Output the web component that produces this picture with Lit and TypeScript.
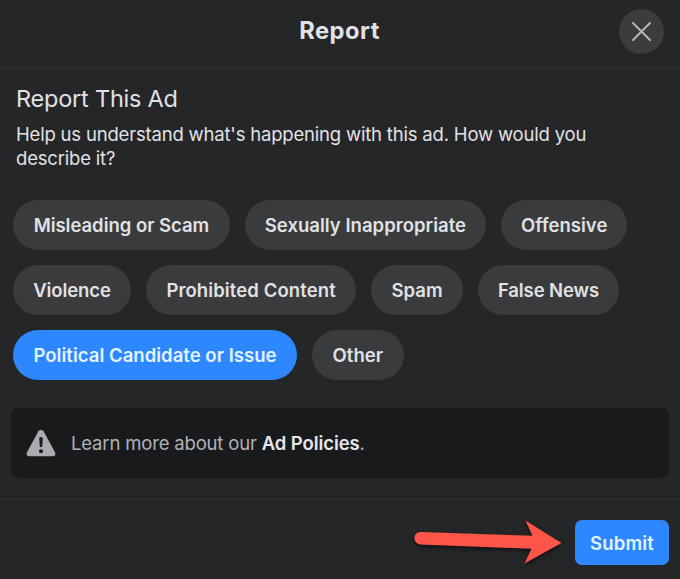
import { LitElement, html, css } from "lit";
import { customElement, state } from "lit/decorators.js";
import { classMap } from "lit/directives/class-map.js";
import { styleMap } from "lit/directives/style-map.js";

interface Reason {
  label: string;
  width: number;
  tracking: number;
}

const REASONS: Reason[][] = [
  [
    { label: "Misleading or Scam", width: 216.3, tracking: -0.03 },
    { label: "Sexually Inappropriate", width: 241, tracking: 0.03 },
    { label: "Offensive", width: 126, tracking: 0.03 },
  ],
  [
    { label: "Violence", width: 117.5, tracking: -0.1 },
    { label: "Prohibited Content", width: 210, tracking: 0.1 },
    { label: "Spam", width: 91.3, tracking: 0 },
    { label: "False News", width: 141, tracking: -0.1 },
  ],
  [
    { label: "Political Candidate or Issue", width: 283.5, tracking: 0.03 },
    { label: "Other", width: 91.5, tracking: 0.1 },
  ],
];

@customElement("app-root")
export class AppRoot extends LitElement {
  static styles = css`
    :host {
      display: flex;
      flex-direction: column;
      position: relative;
      box-sizing: border-box;
      width: 680px;
      height: 579px;
      overflow: hidden;
      background: #252628;
      color: #e0e2e5;
      font-family: Inter, "Liberation Sans", sans-serif;
      font-size: 18.5px;
    }
    * { box-sizing: border-box; }
    button { font: inherit; color: inherit; border: 0; margin: 0; white-space: nowrap; }
    header {
      display: grid;
      grid-template-columns: 1fr auto 1fr;
      align-items: center;
      height: 69px;
      padding: 0 16px 6px 15px;
      border-bottom: 1px solid #303133;
    }
    h1 { grid-column: 2; margin: 0; font-size: 23.7px; font-weight: 700; line-height: 30px; letter-spacing: 0.5px; }
    .close {
      justify-self: end;
      width: 45px;
      height: 45px;
      padding: 0;
      border-radius: 50%;
      background: #3b3c3e;
      display: grid;
      place-items: center;
    }
    svg { display: block; }
    .intro { padding: 15px 16px 0; height: 131px; }
    h2 { margin: 0; font-size: 23.5px; font-weight: 400; line-height: 30px; letter-spacing: -0.22px; }
    p { margin: 0; }
    .intro p { margin-top: 8px; line-height: 24px; letter-spacing: -0.19px; }
    .reasons { display: flex; flex-direction: column; gap: 15.2px; padding-left: 13.3px; height: 208px; }
    .row { display: flex; gap: 15.3px; }
    .chip {
      height: 50px;
      padding: 0 0 1px;
      border-radius: 25px;
      background: #3a3b3d;
      font-weight: 600;
    }
    .chip.selected { background: #2d88ff; color: #e2f2ff; }
    .notice {
      display: flex;
      align-items: center;
      height: 70px;
      margin: 0 11px;
      padding-left: 15px;
      gap: 15px;
      border-radius: 8px;
      background: #191a1c;
      color: #b0b3b8;
      letter-spacing: -0.17px;
    }
    .notice b { font-weight: 600; color: #e4e6eb; letter-spacing: -0.1px; }
    footer {
      display: flex;
      justify-content: flex-end;
      margin-top: 20px;
      padding: 21px 11px 0 0;
      border-top: 1px solid #303133;
      height: 81px;
    }
    .submit {
      width: 94px;
      height: 45px;
      padding: 0;
      border-radius: 7px;
      background: #2d88ff;
      color: #e2f2ff;
      font-weight: 600;
      letter-spacing: 0.15px;
    }
    .arrow { position: absolute; left: 405px; top: 510px; filter: drop-shadow(0 2px 2px #0009); }
  `;

  @state() private selected = "Political Candidate or Issue";

  private chip({ label, width, tracking }: Reason) {
    return html`<button
      class=${classMap({ chip: true, selected: label === this.selected })}
      style=${styleMap({ width: `${width}px`, letterSpacing: `${tracking}px` })}
      @click=${() => (this.selected = label)}
    >${label}</button>`;
  }

  render() {
    return html`
      <header>
        <h1>Report</h1>
        <button class="close" aria-label="Close">
          <svg width="21" height="21" viewBox="0 0 21 21" fill="none" stroke="#b4b6ba" stroke-width="2" stroke-linecap="round">
            <path d="M2 2 19 19M19 2 2 19" />
          </svg>
        </button>
      </header>
      <section class="intro">
        <h2>Report This Ad</h2>
        <p>Help us understand what's happening with this ad. How would you<br />describe it?</p>
      </section>
      <section class="reasons">
        ${REASONS.map((row) => html`<div class="row">${row.map((r) => this.chip(r))}</div>`)}
      </section>
      <section class="notice">
        <svg width="30" height="28" viewBox="0 0 30 28">
          <path d="M12.4 2.3Q15-.8 17.6 2.3L29 23.3Q30.3 27.200 26.800 27.200H3.200Q-.3 27.200 1 23.300Z" fill="#aaabb1" />
          <path d="M13.200 9.600Q13 8 15 8T16.800 9.600L16.200 17.500Q15 19 13.800 17.500Z" fill="#191a1c" />
          <circle cx="15" cy="22.200" r="2" fill="#191a1c" />
        </svg>
        <p>Learn more about our <b>Ad Policies</b>.</p>
      </section>
      <footer><button class="submit">Submit</button></footer>
      <svg class="arrow" width="165" height="60" viewBox="405 510 165 60">
        <path d="M420.500 532 532.500 535.800 525.500 520.500 561.500 543 524.500 563.500 531.500 548.800 420 544.500C412 543 413 532 420.500 532Z" fill="#fd5548" />
      </svg>
    `;
  }
}
